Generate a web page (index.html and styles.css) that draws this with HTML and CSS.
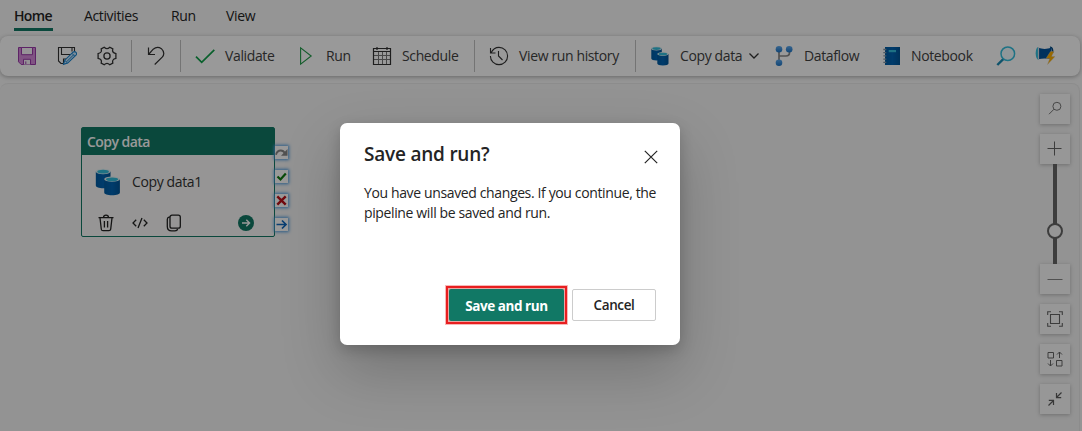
FILE: index.html
```html
<!DOCTYPE html>
<html lang="en">
<head>
<meta charset="utf-8">
<title>Pipeline editor</title>
<link rel="stylesheet" href="styles.css">
</head>
<body>
<svg class="defs" width="0" height="0">
  <defs>
    <linearGradient id="blue" x1="0" x2="1"><stop offset="0" stop-color="#005ba1"/><stop offset=".5" stop-color="#0064b4"/><stop offset="1" stop-color="#005496"/></linearGradient>
    <linearGradient id="sky" x1="0" x2="0" y1="0" y2="1"><stop offset="0" stop-color="#5ea9ee"/><stop offset="1" stop-color="#1c73c4"/></linearGradient>
    <symbol id="cylinders" viewBox="0 0 20 20">
      <path d="M1.300 2.500v10c0 1.200 2.200 2 5.200 2s5.300-.8 5.300-2v-10z" fill="url(#blue)"/>
      <ellipse cx="6.500" cy="2.500" rx="5.300" ry="1.900" fill="#e6f2f5"/><ellipse cx="6.500" cy="2.600" rx="4.200" ry="1.300" fill="#32bedd"/>
      <path d="M7.300 8v9.500c0 1.200 2.200 2 5.600 2s5.600-.8 5.600-2V8z" fill="url(#blue)"/>
      <ellipse cx="12.900" cy="8" rx="5.600" ry="1.900" fill="#e6f2f5"/><ellipse cx="12.900" cy="8.100" rx="4.400" ry="1.300" fill="#32bedd"/>
    </symbol>
  </defs>
</svg>
<div class="app">
  <nav class="tabs">
    <a class="tab tab-active">Home</a><a class="tab tab-activities">Activities</a><a class="tab tab-run">Run</a><a class="tab">View</a>
  </nav>

  <div class="toolbar">
    <div class="tool"><svg class="icon" viewBox="0 0 20 20"><path d="M1.500 1.500h17v17H4.200l-2.700-2.700z" fill="#d58bda" stroke="#9b3bab"/><path d="M4.500 1.500h11v7.200h-11zM6.500 18.500v-5.200h7v5.200" fill="#fbf5fc" stroke="#9b3bab"/><path d="M8.800 18v-2.600" stroke="#9b3bab"/></svg></div>
    <div class="tool"><svg class="icon" viewBox="0 0 20 20"><path d="M6.500 17.500H4L1.500 15V1.500h16v4M4.500 1.500v7h9.500M15 1.500v4M6.500 17.500V13H9" fill="none" stroke="#333" stroke-width="1.100"/><path d="M6.500 18.400l1.300-4.200 8.200-8q1.600-1.200 3 .2 1.200 1.400 0 2.700l-8.300 8z" fill="#cfeaff" stroke="#1683d0" stroke-width="1.100"/><path d="M8 14.600l2.300 2.200M14.800 7.200l2.800 2.800M9.600 15.800l7-7" stroke="#1683d0"/></svg></div>
    <div class="tool"><svg class="icon" viewBox="0 0 20 20"><path d="M7.200 1.200q1.600 1.500 2.800 1.500t2.800-1.500l3 1.700q-.6 2 .2 3.100.7 1 2.900 1.600v4.800q-2.200.5-2.900 1.600-.7 1-.2 3.100l-3 1.700q-1.500-1.500-2.800-1.500t-2.800 1.500l-3-1.700q.6-2.100-.2-3.100-.7-1.100-2.900-1.600V7.600Q3.300 7 4 6q.7-1.100.2-3.100z" fill="none" stroke="#333" stroke-width="1.300"/><circle cx="10" cy="10" r="3.100" fill="none" stroke="#333" stroke-width="1.300"/></svg></div>
    <span class="separator"></span>
    <div class="tool"><svg class="icon" viewBox="0 0 20 20"><path d="M2.500 1.500v7H9M3 8l4.200-4.800q4-3.200 8.200-.5 4.300 4.300.8 8.500L8.700 18.500" fill="none" stroke="#333" stroke-width="1.200"/></svg></div>
    <span class="separator"></span>
    <div class="tool"><svg class="icon" viewBox="0 0 20 20"><path d="M1 10.700l5.700 5.700L19.300 3.900" fill="none" stroke="#10a04a" stroke-width="1.700"/></svg><span>Validate</span></div>
    <div class="tool"><svg class="icon" viewBox="0 0 20 20"><path d="M4.600 1.800v16.400L15.200 10z" fill="none" stroke="#219a48" stroke-width="1.100"/></svg><span>Run</span></div>
    <div class="tool"><svg class="icon" viewBox="0 0 20 20"><path d="M6.500 6v12M10.500 6v12M14.500 6v12M2 9.500h16M2 13.500h16" stroke="#777"/><path d="M1.500 2.500h17v16h-17zM1.500 5.500h17M5 1v3M15 1v3" fill="none" stroke="#333" stroke-width="1.200"/></svg><span>Schedule</span></div>
    <span class="separator"></span>
    <div class="tool"><svg class="icon" viewBox="0 0 20 20"><path d="M1.500 2v5h5M2 7C4 2.800 7 1.400 10 1.400a8.600 8.600 0 1 1-8.600 8.600M9.500 5v5l4 4" fill="none" stroke="#333" stroke-width="1.100"/></svg><span>View run history</span></div>
    <span class="separator"></span>
    <div class="tool"><svg class="icon"><use href="#cylinders"/></svg><span class="copy-label">Copy data</span><svg class="chevron" viewBox="0 0 12 8"><path d="M1.500 1.500L6 6l4.500-4.500" fill="none" stroke="#333" stroke-width="1.300"/></svg></div>
    <div class="tool"><svg class="icon" viewBox="0 0 20 20"><path d="M5 3v13M5 10h7q3.500 0 3.500-3.500V3" fill="none" stroke="#888" stroke-width="1.700"/><g fill="url(#sky)"><circle cx="5" cy="3.300" r="3.300"/><circle cx="15.200" cy="3.300" r="3.300"/><circle cx="5" cy="16.700" r="3.300"/></g></svg><span>Dataflow</span></div>
    <div class="tool"><svg class="icon" viewBox="0 0 20 20"><path d="M4 1h15v18H4z" fill="url(#blue)"/><path d="M7.700 4h7.300v2.200H7.700z" fill="#32bedd"/><path d="M2.300 3.500h3M2.300 6.700h3M2.300 9.900h3M2.300 13.100h3M2.300 16.300h3" stroke="#8095a5" stroke-width="1.300"/></svg><span>Notebook</span></div>
    <div class="tool"><svg class="icon" viewBox="0 0 20 20"><path d="M7.500 12.800L1.300 19" stroke="#198ab3" stroke-width="2.400"/><circle cx="11.800" cy="7.700" r="6.800" fill="#9cebff" fill-opacity=".15" stroke="#32bedd" stroke-width="1.500"/></svg></div>
    <div class="tool"><svg class="icon" viewBox="0 0 20 20"><path d="M3 1.800q6.500 2.200 13.500 0v11.500q-7-1.800-13.500 0z" fill="#00529b"/><path d="M3.500 1C1.500 1 .7 4.500.7 7.300s.8 6.400 2.800 6.400" fill="#32bedd"/><path d="M3.500 1v12.500" stroke="#d1dce5" stroke-width="1.200"/><path d="M15 1.200q2.800-.5 2.800 5.500" fill="none" stroke="#004983" stroke-width="1.400"/><path d="M15.500 5.500l-4.500 7h3.800L12.500 18.500 20 10.500h-3.600l2.600-5z" fill="#ffb000" stroke="#d9cab0" stroke-width=".4"/></svg></div>
  </div>

  <main class="canvas">
    <section class="activity">
      <header class="activity-type">Copy data</header>
      <div class="activity-name"><svg class="activity-icon"><use href="#cylinders"/></svg><span>Copy data1</span></div>
      <footer class="activity-actions">
        <svg viewBox="0 0 18 18"><path d="M1.500 3.700h15M6.500 3.500q0-2.300 2.500-2.300t2.500 2.300M3 4l1.300 11.200q.2 1.500 1.700 1.500h6q1.500 0 1.700-1.500L15 4M7.400 7v6.500M10.600 7v6.500" fill="none" stroke="#222" stroke-width="1.300"/></svg>
        <svg viewBox="0 0 18 18"><path d="M5.200 5.700L2 9l3.200 3.300M12.800 5.700L16 9l-3.200 3.300M11 4l-4 10" fill="none" stroke="#222" stroke-width="1.300"/></svg>
        <svg viewBox="0 0 18 18"><rect x="5" y="1.200" width="10.300" height="13" rx="2" fill="none" stroke="#222" stroke-width="1.300"/><path d="M5 3.200H4q-1.700.5-1.700 2.300v7q0 4.300 4.300 4.300H10q2.200 0 2.700-1.800" fill="none" stroke="#222" stroke-width="1.300"/></svg>
        <svg class="go" viewBox="0 0 18 18"><circle cx="9" cy="9" r="8" fill="#117865"/><path d="M5 9h7.500M9.300 5.700L12.600 9l-3.300 3.300" fill="none" stroke="#fff" stroke-width="1.400"/></svg>
      </footer>
      <div class="ports">
        <svg class="port" viewBox="0 0 13 13"><path d="M1 8.700q1-4.200 4.800-4.200 2.700 0 4.400 3" fill="none" stroke="#888" stroke-width="1.800"/><path d="M12.500 3v6.800H6z" fill="#888"/></svg>
        <svg class="port" viewBox="0 0 13 13"><path d="M2.500 6.500l3 3L10.800 3.500" fill="none" stroke="#107c10" stroke-width="2.200"/></svg>
        <svg class="port" viewBox="0 0 13 13"><path d="M2.300 2.300l8.400 8.400M10.700 2.300l-8.400 8.400" stroke="#bd1018" stroke-width="2.400"/></svg>
        <svg class="port" viewBox="0 0 13 13"><path d="M1.500 6.500h9.500M7 2.500l4 4-4 4" fill="none" stroke="#1068bf" stroke-width="1.700"/></svg>
      </div>
    </section>

    <aside class="zoom">
      <div class="zoom-button search"><svg viewBox="0 0 16 16"><circle cx="9.900" cy="5.300" r="4" fill="none" stroke="#777"/><path d="M7 8.200L2 13.200" stroke="#777"/></svg></div>
      <div class="zoom-button"><svg viewBox="0 0 16 16"><path d="M.5 7.500h14M7.500.5v14" stroke="#666"/></svg></div>
      <div class="track"><span class="thumb"></span></div>
      <div class="zoom-button"><svg viewBox="0 0 16 16"><path d="M.5 8.500h15" stroke="#888"/></svg></div>
      <div class="zoom-button fit"><svg viewBox="0 0 16 16"><path d="M3.500 3.500h9v9h-9zM.7 4V.7H4M12 .7h3.300V4M.7 12v3.300H4M12 15.300h3.300V12" fill="none" stroke="#666" stroke-width="1.100"/></svg></div>
      <div class="zoom-button layout"><svg viewBox="0 0 16 16"><path d="M1 1.500h5.500V7H1zM9.500 9.500H15V15H9.500zM12.500 7V1M10 3.500L12.500 1 15 3.500M3.500 9v6M1 12.500L3.500 15 6 12.500" fill="none" stroke="#666"/></svg></div>
      <div class="zoom-button collapse"><svg viewBox="0 0 16 16"><path d="M14.500 1.500L9.500 6.500M9.500 2v4.700h4.700M1.500 14.500l5-5M1.800 9.300h4.700V14" fill="none" stroke="#5c5c5c" stroke-width="1.200"/></svg></div>
    </aside>
  </main>
</div>

<div class="overlay">
  <div class="dialog">
    <header class="dialog-head"><h1>Save and run?</h1><svg class="close" viewBox="0 0 14 14"><path d="M.8.8l12.400 12.400M13.200.8L.8 13.200" stroke="#242424" stroke-width="1.200"/></svg></header>
    <p class="message">You have unsaved changes. If you continue, the<br>pipeline will be saved and run.</p>
    <footer class="dialog-actions"><div class="highlight"><button class="primary">Save and run</button></div><button class="secondary">Cancel</button></footer>
  </div>
</div>
</body>
</html>
```
FILE: styles.css
```css
* { box-sizing: border-box; }
body { margin: 0; width: 1082px; height: 431px; overflow: hidden; font: 14px/20px "Open Sans", "Noto Sans", sans-serif; letter-spacing: -.37px; color: #242424; }
svg { display: block; flex: none; }
.defs { position: absolute; }
.app { width: 1082px; height: 431px; background: #f8f8f8; display: flex; flex-direction: column; }
.tabs { height: 36px; padding: 6px 0 0 14px; display: flex; }
.tab { height: 25px; white-space: nowrap; }
.tab-active { width: 39px; margin-right: 31px; border-bottom: 3px solid #117865; font-weight: 600; letter-spacing: -.65px; }
.tab-activities { width: 87px; }
.tab-run { width: 55px; }
.toolbar { width: 1080px; height: 40px; flex: none; margin-bottom: 8px; padding-left: 17px; background: #fff; border-radius: 8px; box-shadow: 0 1px 4px rgba(0,0,0,.3); display: grid; align-items: center; grid-template-columns: 40px 40px 34px 15px 34px 15px 101px 76px 102px 15px 146px 15px 124px 107px 115px 39px 20px; }
.tool { display: flex; align-items: center; gap: 10px; white-space: nowrap; color: #424242; }
.icon { width: 20px; height: 20px; }
.separator { width: 1px; height: 32px; background: #c2c2c2; }
.chevron { width: 12px; height: 8px; margin-left: -5px; }
.copy-label { width: 63px; }
.canvas { width: 1080px; height: 348px; margin-top: -1px; background: #f5f5f5; border: 1px solid #eaeaea; border-left: 0; border-bottom: 0; border-radius: 8px 8px 0 0; display: flex; justify-content: space-between; padding: 10px 9px 0 81px; }
.activity { position: relative; width: 194px; height: 110px; margin-top: 33px; background: #faf9f8; border: 1px solid #117865; border-radius: 2px; }
.activity-type { height: 27px; padding: 4px 5px; background: #117865; color: #fff; font-weight: 600; letter-spacing: -.55px; }
.activity-name { height: 53px; display: flex; align-items: center; padding-left: 12px; gap: 10px; color: #333; }
.activity-icon { width: 28px; height: 28px; }
.activity-actions { height: 30px; display: flex; align-items: center; padding: 0 0 1px 15px; gap: 16px; }
.activity-actions svg { width: 18px; height: 18px; }
.activity-actions .go { margin-left: 38px; }
.ports { position: absolute; left: 193px; top: 18px; display: grid; gap: 11px; }
.port { width: 13px; height: 13px; background: #fff; box-shadow: 0 0 3px 1px #4b9ce0; }
.zoom { width: 30px; display: flex; flex-direction: column; align-items: center; }
.zoom-button { width: 30px; height: 30px; flex: none; background: #fcfcfc; box-shadow: 0 1px 4px rgba(0,0,0,.25); display: flex; align-items: center; justify-content: center; }
.zoom-button svg { width: 16px; height: 16px; }
.search, .zoom .fit, .layout { margin-bottom: 10px; }
.fit { margin-top: 10px; }
.track { width: 4px; height: 100px; background: #666; position: relative; flex: none; }
.thumb { position: absolute; left: -6px; top: 59px; width: 16px; height: 16px; border: 2px solid #666; border-radius: 50%; background: #fafafa; }
.overlay { position: absolute; inset: 0; width: 1082px; height: 431px; background: rgba(0,0,0,.4); display: flex; padding: 123px 0 0 340px; overflow: hidden; }
.dialog { width: 340px; height: 222px; padding: 19px 24px 0; background: #fff; border-radius: 7px; box-shadow: 0 25px 58px rgba(0,0,0,.22), 0 5px 14px rgba(0,0,0,.18); }
.dialog-head { display: flex; justify-content: space-between; height: 41px; }
h1 { margin: 0; font-size: 19px; line-height: 25px; font-weight: 600; letter-spacing: -.22px; }
.close { width: 14px; height: 14px; margin: 8px -2px 0 0; }
.message { margin: 0; height: 103px; white-space: nowrap; }
.dialog-actions { display: flex; justify-content: flex-end; gap: 5px; }
.highlight { width: 121px; height: 38px; border: 2px solid #e81e20; padding: 1px; background: #e9a5a2; box-shadow: 0 0 0 1px #f8b8b8; }
.primary, .secondary { font: 600 13.500px/20px "Open Sans", sans-serif; letter-spacing: -.37px; padding: 0; }
.primary { width: 115px; height: 32px; padding-top: 2px; display: block; background: #117865; color: #fff; border: 0; border-radius: 2px; font-weight: 700; letter-spacing: -.45px; }
.secondary { width: 84px; height: 32px; margin-top: 3px; color: #242424; background: #fff; border: 1px solid #ccc; border-radius: 2px; }
```
